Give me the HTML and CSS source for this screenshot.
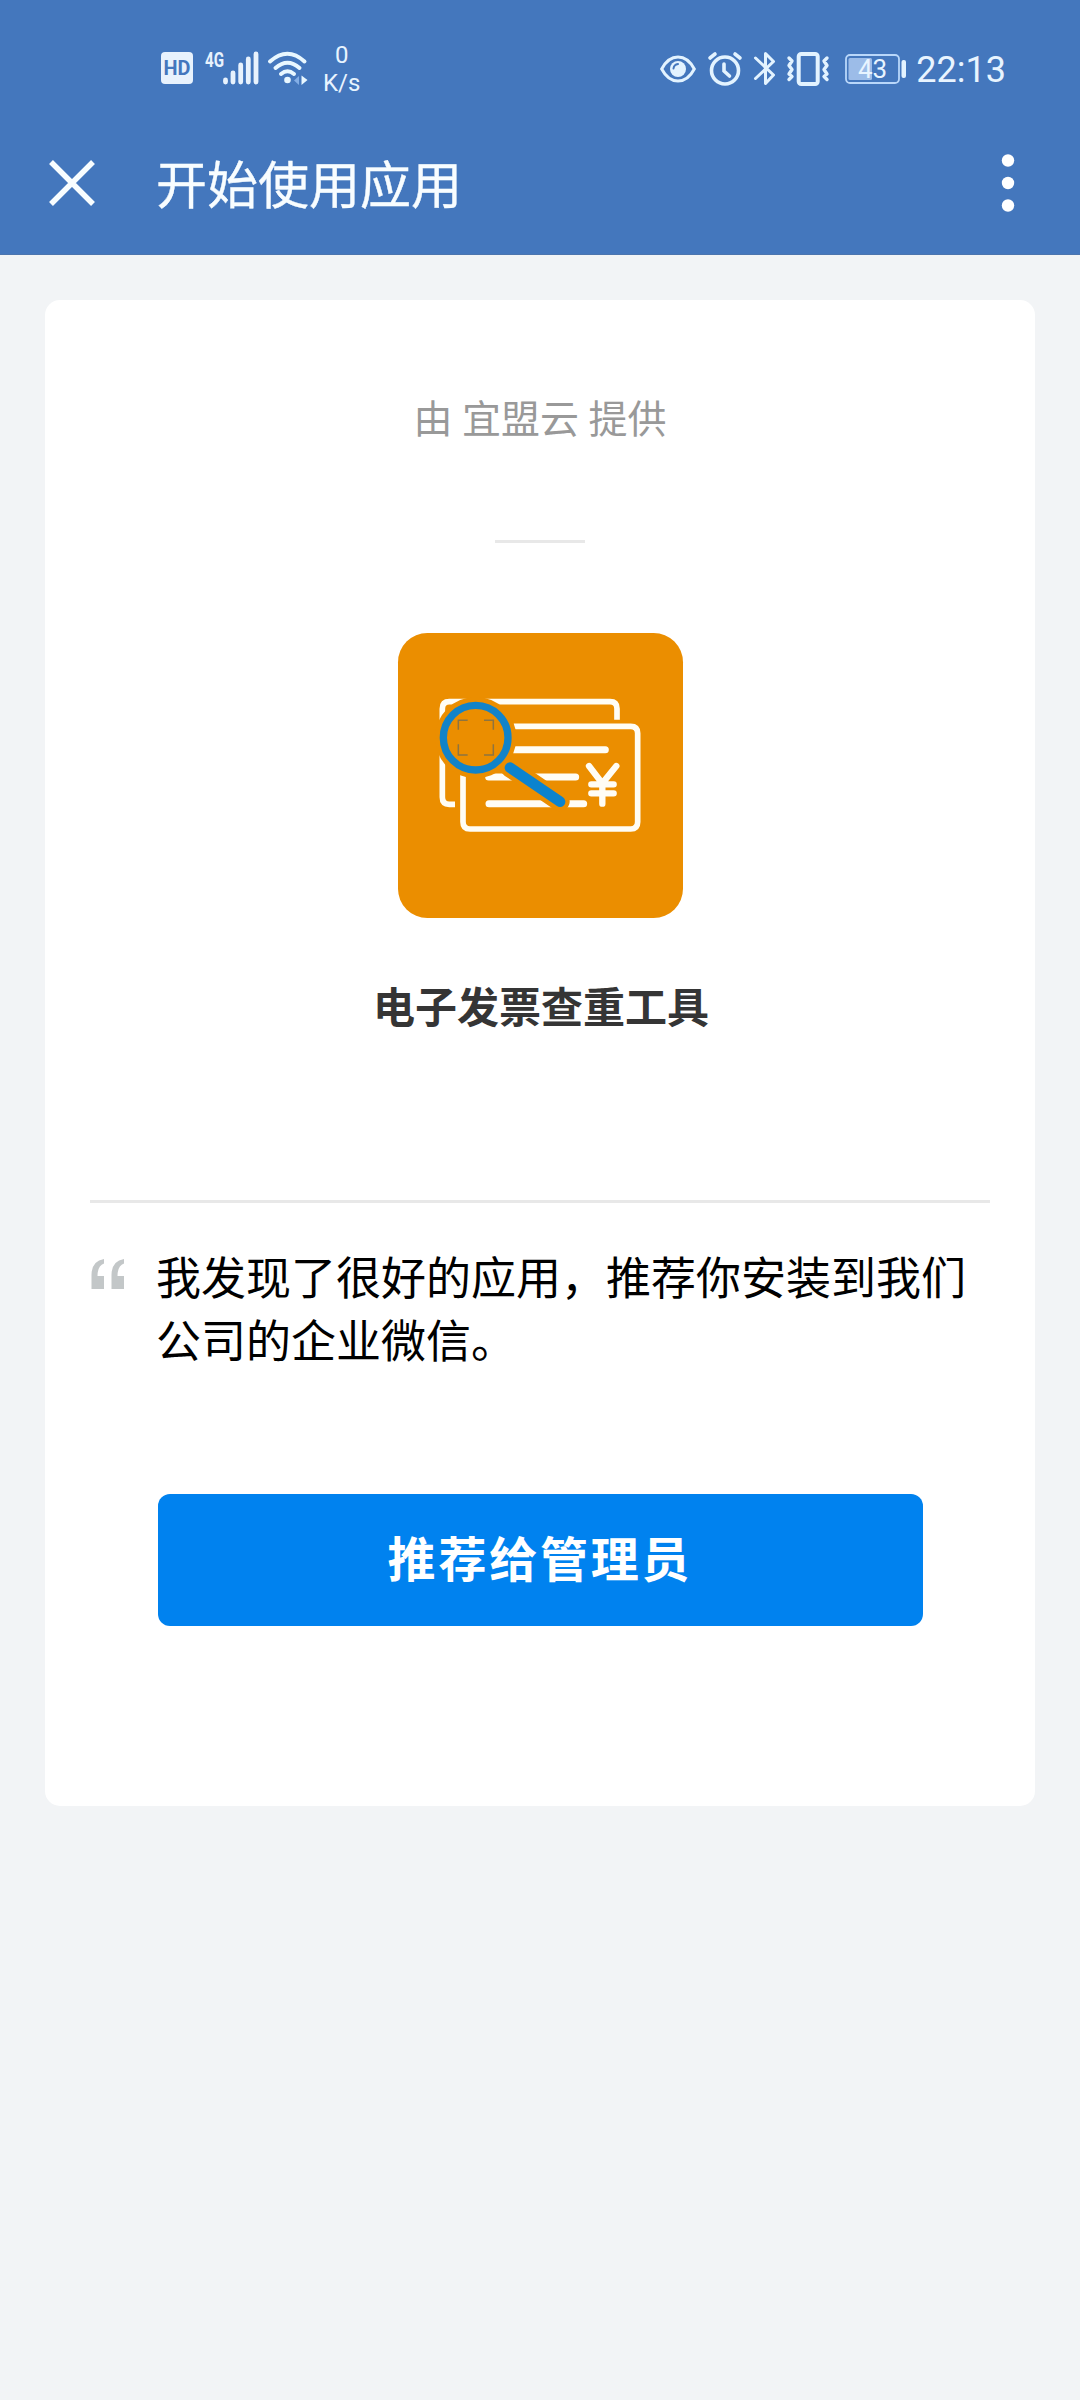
FILE: index.html
```html
<!DOCTYPE html>
<html lang="zh-CN">
<head>
<meta charset="utf-8">
<title>开始使用应用</title>
<link rel="stylesheet" href="styles.css">
</head>
<body>
<header class="header">
  <div class="status">
    <div class="status-left">
      <svg class="hd" width="32" height="32" viewBox="0 0 32 32">
        <rect width="32" height="32" rx="4" fill="#e8f2fd"/>
        <text x="16" y="23.2" text-anchor="middle" textLength="27" lengthAdjust="spacingAndGlyphs" class="hd-text">HD</text>
      </svg>
      <svg class="signal" width="55" height="34" viewBox="0 0 55 34">
        <text x="0" y="15.500" textLength="19" lengthAdjust="spacingAndGlyphs" class="net-text">4G</text>
        <g stroke="#e8f2fd" stroke-width="4.800" stroke-linecap="round">
          <path d="M20.500 31v-2M28 31v-9M35.700 31v-17M43.300 31v-23M51 31V3"/>
        </g>
      </svg>
      <svg class="wifi" width="40" height="34" viewBox="0 0 40 34">
        <g fill="none" stroke="#e8f7ff" stroke-width="4" stroke-linecap="round">
          <path d="M2 10.500Q19.500-5 36.500 10.500M7.500 17Q19.500 6.500 31.500 17M13 23Q19.500 17.500 26 23"/>
        </g>
        <circle cx="19.500" cy="29" r="3.300" fill="#e8f7ff"/>
        <path d="M31 25v9l-5-4.500z" fill="#83aee6"/>
        <path d="M33.500 24.500v9.500l6-5z" fill="#e8f7ff"/>
      </svg>
      <div class="speed"><span>0</span><span>K/s</span></div>
    </div>
    <div class="status-right">
      <svg class="eye" width="36" height="28" viewBox="0 0 36 28">
        <path d="M1.700 14Q8 2 18 2t16.300 12Q28 26 18 26T1.700 14z" fill="none" stroke="#e3f3ff" stroke-width="3"/>
        <circle cx="18" cy="14" r="8" fill="#e3f3ff"/>
        <path d="M13.500 13.500q.5-4 4.500-4.500" fill="none" stroke="#4477bd" stroke-width="2" stroke-linecap="round"/>
      </svg>
      <svg class="alarm" width="34" height="34" viewBox="0 0 34 34">
        <g fill="none" stroke="#e3f3ff" stroke-width="3.600" stroke-linecap="round">
          <circle cx="17" cy="18.500" r="13.500"/>
          <path d="M2 6l5-4M32 6l-5-4M16 12v7l5.500 5"/>
        </g>
      </svg>
      <svg class="bt" width="22" height="35" viewBox="0 0 22 35">
        <path d="M1.500 7l18 17-8 8.500v-30l8 8-18 17" fill="none" stroke="#e3f3ff" stroke-width="3" stroke-linecap="round" stroke-linejoin="round"/>
      </svg>
      <svg class="vibrate" width="42" height="34" viewBox="0 0 42 34">
        <g fill="none" stroke="#e3f3ff" stroke-linecap="round" stroke-linejoin="round">
          <rect x="11.700" y="2" width="19" height="30" rx="2.500" stroke-width="4"/>
          <path d="M2 6l3 3-3 4.500 3 4-3 4.500 3 2.500-3 3M40 6l-3 3 3 4.500-3 4 3 4.500-3 2.500 3 3" stroke-width="3.400"/>
        </g>
      </svg>
      <svg class="battery" width="62" height="30" viewBox="0 0 62 30">
        <rect x="1" y="1" width="53" height="28" rx="4" fill="none" stroke="#b9d7fa" stroke-width="1.800"/>
        <rect x="3.500" y="4" width="23.500" height="22" rx="1.500" fill="#9cbce8"/>
        <rect x="56.500" y="6" width="4.500" height="18" rx="2" fill="#e3f3ff"/>
        <text x="27.500" y="23.500" text-anchor="middle" class="battery-text">43</text>
      </svg>
      <span class="clock">22:13</span>
    </div>
  </div>
  <div class="navbar">
    <svg class="close" width="46" height="46" viewBox="0 0 46 46">
      <path d="M2 2l42 42M44 2L2 44" stroke="#f8fdff" stroke-width="5.500"/>
    </svg>
    <h1 class="nav-title">开始使用应用</h1>
    <svg class="more" width="14" height="58" viewBox="0 0 14 58" fill="#fff">
      <circle cx="7" cy="6.500" r="6.200"/><circle cx="7" cy="29" r="6.200"/><circle cx="7" cy="51.500" r="6.200"/>
    </svg>
  </div>
</header>
<main class="card">
  <p class="provider">由 宜盟云 提供</p>
  <div class="dash"></div>
  <svg class="app-icon" width="285" height="285" viewBox="54 69 855 855">
    <rect x="54" y="69" width="855" height="855" rx="88" fill="#eb8e00"/>
    <g fill="none" stroke="#fffdf5" stroke-width="17">
      <path d="M711 329V296Q711 275 690 275H208Q187 275 187 296V562Q187 583 208 583H225"/>
      <path d="M400 349H752Q773 349 773 370V636Q773 657 752 657H270Q249 657 249 636V495"/>
    </g>
    <g fill="none" stroke="#fffdf5" stroke-width="21" stroke-linecap="round">
      <path d="M400 419H676M326 501H587M327 581H611"/>
      <path d="M627 468L667 520L709 468M667 520V581M634 523H701M634 550H701" stroke-width="19"/>
    </g>
    <circle cx="287" cy="383" r="122" fill="#eb8e00"/>
    <path d="M390 473L540 575" stroke="#eb8e00" stroke-width="58" stroke-linecap="round"/>
    <circle cx="287" cy="383" r="97" fill="none" stroke="#1283c8" stroke-width="22"/>
    <path d="M390 473L540 575" stroke="#0b83ce" stroke-width="32" stroke-linecap="round"/>
    <path d="M235 359V331H263M312 331H340V359M340 403V435H312M263 435H235V403" fill="none" stroke="#8d7440" stroke-width="4.500"/>
  </svg>
  <h2 class="app-name">电子发票查重工具</h2>
  <section class="message">
    <svg class="quote" width="34" height="31" viewBox="0 0 34 31" fill="#c3c7c8">
      <path d="M13 0v4.500Q6.500 7 6.500 17H13v13H.5V16Q.5 2 13 0z"/>
      <path d="M33 0v4.500Q26.500 7 26.500 17H33v13H20.500V16Q20.500 2 33 0z"/>
    </svg>
    <p class="message-text">我发现了很好的应用，推荐你安装到我们公司的企业微信。</p>
  </section>
  <button class="action" type="button">推荐给管理员</button>
</main>
</body>
</html>
```

FILE: styles.css
```css
* { box-sizing: border-box; }
body {
  margin: 0;
  min-height: 2400px;
  background: #f2f4f6;
  font-family: "Noto Sans CJK SC", sans-serif;
}
h1, h2, p { margin: 0; font-weight: 400; }
svg { display: block; flex: none; overflow: visible; }

.header { height: 255px; background: #4477bd; border-bottom: 1px solid #4c75ae; }
.status {
  display: flex;
  justify-content: space-between;
  height: 110px;
  padding: 0 74px 0 161px;
  font-family: Roboto, sans-serif;
  color: #e8f4ff;
}
.status-left, .status-right { display: flex; align-items: flex-start; }
.hd { margin-top: 52px; }
.hd-text { font: 700 21px Roboto, sans-serif; fill: #4477bd; }
.signal { margin: 51px 0 0 12px; }
.net-text { font: 700 20px Roboto, sans-serif; fill: #e8f2fd; }
.wifi { margin: 51px 0 0 8px; }
.speed {
  display: flex;
  flex-direction: column;
  align-items: center;
  margin: 41px 0 0 15px;
  font-size: 24px;
  line-height: 28px;
}
.eye { margin-top: 55px; }
.alarm { margin: 52px 0 0 12px; }
.bt { margin: 51px 0 0 12px; }
.vibrate { margin: 52px 0 0 11px; }
.battery { margin: 54px 0 0 16px; }
.battery-text { font: 400 26px Roboto, sans-serif; fill: #e8f4ff; }
.clock { margin: 49px 0 0 9px; font-size: 36px; line-height: 42px; }

.navbar { display: flex; align-items: flex-start; padding: 0 65px 0 49px; }
.close { margin-top: 50px; }
.nav-title {
  flex: 1;
  margin: 35px 0 0 61px;
  font-size: 51px;
  line-height: 74px;
  color: #f8fdff;
  -webkit-text-stroke: 0.4px #f8fdff;
}
.more { margin-top: 44px; }

.card {
  display: flex;
  flex-direction: column;
  align-items: center;
  width: 990px;
  height: 1506px;
  margin: 45px auto 0;
  padding-top: 88px;
  border-radius: 15px;
  background: #fff;
}
.provider { font-size: 39px; line-height: 57px; word-spacing: 0.7px; color: #999; }
.dash { width: 90px; height: 3px; margin-top: 95px; background: #e8e8e8; }
.app-icon { margin-top: 90px; }
.app-name {
  margin-top: 56px;
  padding-left: 2px;
  font-size: 42px;
  font-weight: 700;
  line-height: 62px;
  color: #353535;
}
.message {
  display: flex;
  width: 900px;
  margin-top: 164px;
  padding-top: 41px;
  border-top: 3px solid #e8e8e8;
}
.quote { margin: 15px 31px 0 1px; }
.message-text { width: 820px; font-size: 45px; line-height: 63px; color: #000; }
.action {
  width: 765px;
  height: 132px;
  margin-top: 124px;
  padding: 0 0 8px;
  border: 0;
  border-radius: 12px;
  background: #0082ef;
  font-family: inherit;
  font-size: 48px;
  font-weight: 700;
  letter-spacing: 2.8px;
  color: #fff;
}
```
